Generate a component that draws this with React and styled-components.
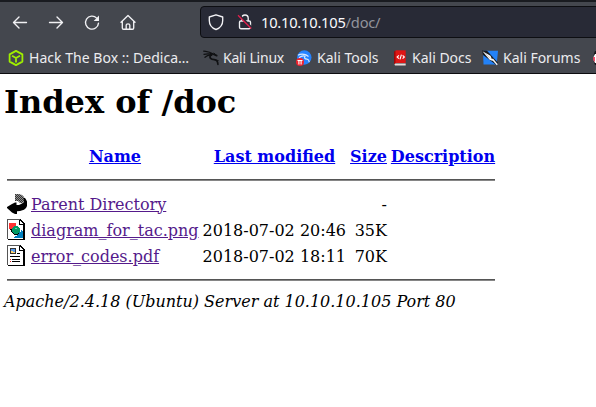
import React from 'react';
import styled, { createGlobalStyle } from 'styled-components';

const GlobalStyle = createGlobalStyle`
  body { margin: 0; background: #fff; overflow: hidden; }
  * { box-sizing: border-box; }
`;

const Window = styled.div`
  height: 407px;
  overflow: hidden;
  color: #000;
  font: 16px/19px 'DejaVu Serif', serif;
`;
const Chrome = styled.header`
  height: 74px;
  overflow: hidden;
  border-top: 2px solid #191b20;
  border-bottom: 1px solid #0c0c0f;
  background: #44474e;
  color: #ececef;
  font-family: 'Noto Sans', sans-serif;
`;
const NavBar = styled.nav`
  display: flex;
  height: 40px;
  padding: 4px 0 4px 12px;
`;
const NavButtons = styled.div`
  display: flex;
  flex: none;
  align-items: center;
  gap: 20px;
  width: 188px;
`;
const Icon = styled.svg`
  display: block;
  flex: none;
  width: ${(p) => p.$w || 16}px;
  height: ${(p) => p.$h || 16}px;
  overflow: visible;
`;
const AddressBar = styled.div`
  display: flex;
  flex: none;
  align-items: center;
  width: 420px;
  height: 32px;
  padding-left: 7px;
  border: 1px solid #0d0e12;
  border-radius: 4px;
  background: #282a36;
`;
const Url = styled.span`
  margin-left: 8px;
  color: #fbfbfe;
  font-size: 14.67px;
  letter-spacing: -0.22px;
  line-height: 20px;
  white-space: pre;
`;
const UrlPath = styled.span`
  color: #93949c;
`;
const Bookmarks = styled.nav`
  display: flex;
  height: 31px;
  padding-left: 8px;
`;
const Bookmark = styled.div`
  display: flex;
  flex: none;
  align-items: center;
  gap: ${(p) => p.$gap || 5}px;
  width: ${(p) => p.$w}px;
  font-size: 14px;
  line-height: 20px;
  white-space: nowrap;
`;
const Label = styled.span`
  letter-spacing: ${(p) => p.$ls || 0}px;
`;
const Page = styled.main`
  padding: 9px 3px 0;
`;
const Title = styled.h1`
  margin: 0 0 26px 1px;
  font-size: 32px;
  line-height: 38px;
`;
const Listing = styled.div`
  display: grid;
  width: 488px;
  margin-left: 4px;
  grid-template-columns: 20px 168px 143px 37px 104px;
  grid-template-rows: 19px 25px 26px 26px 26px 12px;
  column-gap: 4px;
  align-items: center;
`;
const Heading = styled.a`
  grid-column: ${(p) => p.$col};
  justify-self: center;
  color: #0000ee;
  font-weight: bold;
  text-decoration: underline;
  white-space: nowrap;
`;
const Rule = styled.hr`
  grid-column: 1 / -1;
  align-self: start;
  width: 100%;
  height: 2px;
  margin: ${(p) => p.$top}px 0 0;
  border: 0;
  border-top: 1px solid #555;
  background: #868686;
`;
const FileIcon = styled(Icon)`
  grid-column: 1;
`;
const FileLink = styled.a`
  grid-column: 2;
  color: #551a8b;
  text-decoration: underline;
  white-space: nowrap;
`;
const Cell = styled.span`
  grid-column: ${(p) => p.$col};
  justify-self: end;
  white-space: nowrap;
`;
const Footer = styled.address`
  margin: 11px 0 0 1px;
  font-style: italic;
`;

const stroke = { fill: 'none', stroke: '#f1f1f4', strokeWidth: 1.35, strokeLinecap: 'round', strokeLinejoin: 'round' };

const Back = () => <Icon viewBox="0 0 16 16"><path {...stroke} d="M14.5 8.5h-13M7 3 1.5 8.5 7 14" /></Icon>;
const Forward = () => <Icon viewBox="0 0 16 16"><path {...stroke} d="M1.5 8.5h13M9 3l5.5 5.5L9 14" /></Icon>;
const Reload = () => (
  <Icon viewBox="0 0 16 16">
    <path {...stroke} d="M12.7 4.1A6.5 6.5 0 1 0 14.5 9.1" />
    <path fill="#f1f1f4" d="M15 1.5v5.4H9.7z" />
  </Icon>
);
const Home = () => (
  <Icon viewBox="0 0 16 16">
    <path {...stroke} d="M1 8.2 8 1.5l7 6.7M2.3 7.3v6.6q0 1.3 1.3 1.3h8.8q1.3 0 1.3-1.3V7.3M6.2 15v-4q0-1.2 1.8-1.2t1.8 1.2v4" />
  </Icon>
);
const Shield = () => (
  <Icon viewBox="0 0 16 16">
    <path {...stroke} d="M8 .8 14.7 3v3.4C14.7 10.8 12 14 8 15.5 4 14 1.3 10.8 1.3 6.4V3z" />
  </Icon>
);
const InsecureLock = styled(Icon)`
  margin-left: 13px;
`;
const Lock = () => (
  <InsecureLock viewBox="0 0 16 16">
    <path {...stroke} d="M4.8 7V4.2a3.2 3.2 0 0 1 6.4 0V7M3.8 7h8.4q1.3 0 1.3 1.3v5q0 1.4-1.3 1.4H3.8q-1.3 0-1.3-1.4v-5Q2.5 7 3.8 7z" />
    <path stroke="#282a36" strokeWidth="2.4" d="m2.5 1.5 12 12" />
    <path stroke="#e3204d" strokeWidth="1.3" d="m1 1.3 13.2 13.2" />
  </InsecureLock>
);

const Cube = () => (
  <Icon viewBox="0 0 16 16">
    <path fill="none" stroke="#9fef00" strokeWidth="1.8" strokeLinejoin="round" d="m8 .9 6.4 3.5v7.2L8 15.1l-6.4-3.5V4.4zM4 5.8 8 8l4-2.2M8 8v4.6" />
  </Icon>
);
const Dragon = () => (
  <Icon viewBox="0 0 16 16">
    <g fill="none" stroke="#101113" strokeLinecap="round" strokeLinejoin="round">
      <path strokeWidth="1.3" d="M.7 1.2c3.1.5 6.1.3 8.3 2.6M1 4.4c2.9-1 5-.8 8-.2M2 7.3c2-1.7 4.3-2.5 6.7-1.9" />
      <path strokeWidth="1.7" d="M8.4 3.5 11 4.4l2.7 1.2M8 4.4C5.4 8 8.4 9.5 11.3 9.6c2.6.1 3.5 2 3.6 4.7" />
      <path strokeWidth=".9" d="m11 3 1.5 1.5M12 10l3.2.5" />
    </g>
  </Icon>
);
const Tools = () => (
  <Icon viewBox="0 0 16 16">
    <circle cx="8.3" cy="7.5" r="7.2" fill="#2583ff" />
    <path fill="none" stroke="#d9e9ff" strokeWidth="1.2" d="M2 5.3c3-2 5.3-1.5 8-.4l2.5 1.5M3 7.7c2.2-1.7 4.4-2 6-1.5-1 2.2-.2 2.8 2 3 2 .2 2 1.3 2.3 3" />
    <circle cx="4" cy="12" r="4" fill="#ee222e" />
    <path fill="none" stroke="#fff" strokeWidth="1.1" d="M1.5 10.5h5M2.9 10.5v4M5.1 10.5v4" />
  </Icon>
);
const Docs = () => (
  <Icon viewBox="0 0 16 16">
    <path fill="#9e0909" d="M2 1.2h2V14H2z" />
    <path fill="#e01515" d="M3.5.3h10.2V13H3.5z" />
    <path fill="#e7dcd9" d="M3 13.5h10.7v2.1H3q-1-1 0-2.1z" />
    <path fill="none" stroke="#fff" strokeWidth="1.1" d="M6.9 5.3 5.1 7l1.8 1.7m3.7-3.4L12.4 7l-1.8 1.7M9.4 4.7 8 9.3" />
  </Icon>
);
const Forums = () => (
  <Icon viewBox="0 0 16 16">
    <path fill="#2382f7" d="M1 .8h15L14.7 14.5H1.5z" />
    <path fill="#17191d" d="m0 .5 5 .3 11 12-2 2L1 5z" />
    <path fill="#f8f8f8" d="m.5 1.3 8 4.4 2.2 5.2-3.1-1.2-3.4-4zM9.5 9.2l1.5-.7 4.7 5.8-.9.9z" />
    <path fill="none" stroke="#bac0c8" strokeWidth=".8" d="m3 3.2 5 5" />
  </Icon>
);
const NextBookmark = () => (
  <Icon viewBox="0 0 16 16">
    <path fill="#16171b" d="M2 1h14v14H2L.8 12V4z" />
    <path fill="#fff" d="M2 4h2v9H2L.5 10V7z" />
    <path fill="#ed2448" d="M.3 7h1.5v5L.3 10z" />
  </Icon>
);

const ParentIcon = () => (
  <FileIcon viewBox="0 0 20 22" $w={20} $h={22}>
    <defs>
      <pattern id="speckle" width="2" height="2" patternUnits="userSpaceOnUse">
        <path fill="#333" d="M0 0h2v2H0z" />
        <path fill="#909090" d="M0 0h1v1H0zm1 1h1v1H1z" shapeRendering="crispEdges" />
      </pattern>
    </defs>
    <path fill="url(#speckle)" d="M8 1h4l3 1 2 2 1 4-3 2h-2l-2-2H8z" />
    <path fill="#000" d="M16.5 5H18l1 1.5 1 2V13l-1 2-2 1.7-4 1.3-3 .3V21H8l-3-1.5-5-4.5V14l5-3 3-1.5h1.5V12H12l3-1.5 2-1.5z" />
  </FileIcon>
);
const SheetFrame = () => (
  <>
    <path fill="#fff" d="M0 0h13l4 4v16H0z" />
    <path fill="#555" d="M0 0h13v1H1v19H0z" />
    <path fill="#000" d="M13 0h1v1h1v1h1v1h1v1h1v17H1v-1h15V6h-4V1h1v4h3V4h-1V3h-1V2h-1z" />
  </>
);
const ImageIcon = () => (
  <FileIcon viewBox="0 0 20 22" $w={20} $h={22} shapeRendering="crispEdges">
    <SheetFrame />
    <path fill="#ff3333" d="M2 4h7v6H2z" />
    <path fill="#0080c0" d="M14 11h1v1h1v7H7v-1h1v-1h2v-2h2v-2h2z" />
    <path fill="#009966" d="M7 7h4v1h1v1h1v4h-1v1h-1v1H7v-1H6v-1H5V9h1V8h1z" />
    <path fill="#6ed7a2" d="M8 9h2v1H8z" />
    <path fill="#000" d="M3 10h2v3h1v1h1v1h4v-1h1v1h-1v1H7v-1H6v-1H5v-1H4v-2H3z" />
  </FileIcon>
);
const PdfIcon = () => (
  <FileIcon viewBox="0 0 20 22" $w={20} $h={22} shapeRendering="crispEdges">
    <SheetFrame />
    <path fill="#333" d="M3 3h6v6H3z" />
    <path fill="#579bed" d="M4 4h4v4H4z" />
    <path fill="#ffd270" d="M4 6h2v1h2v1H4z" />
    <path fill="#000" d="M10 8h3v1h-3zM3 11h10v1H3zm2 3h8v1H5zm0 2h8v1H5z" />
    <path fill="#e12626" d="M3 14h1v1H3zm0 2h1v1H3z" />
  </FileIcon>
);

const bookmarks = [
  { label: 'Hack The Box :: Dedica…', width: 195, icon: <Cube />, spacing: 0.03 },
  { label: 'Kali Linux', width: 93, icon: <Dragon />, gap: 4, spacing: -0.2 },
  { label: 'Kali Tools', width: 96, icon: <Tools /> },
  { label: 'Kali Docs', width: 90, icon: <Docs />, gap: 4 },
  { label: 'Kali Forums', width: 111, icon: <Forums /> },
  { label: '', width: 16, icon: <NextBookmark /> },
];

const files = [
  { name: 'Parent Directory', icon: <ParentIcon />, date: '', size: '-' },
  { name: 'diagram_for_tac.png', icon: <ImageIcon />, date: '2018-07-02 20:46', size: '35K' },
  { name: 'error_codes.pdf', icon: <PdfIcon />, date: '2018-07-02 18:11', size: '70K' },
];

export default function App() {
  return (
    <Window>
      <GlobalStyle />
      <Chrome>
        <NavBar>
          <NavButtons><Back /><Forward /><Reload /><Home /></NavButtons>
          <AddressBar><Shield /><Lock /><Url>10.10.10.105<UrlPath>/doc/</UrlPath></Url></AddressBar>
        </NavBar>
        <Bookmarks>
          {bookmarks.map((item) => (
            <Bookmark key={item.label} $w={item.width} $gap={item.gap}>
              {item.icon}
              <Label $ls={item.spacing}>{item.label}</Label>
            </Bookmark>
          ))}
        </Bookmarks>
      </Chrome>
      <Page>
        <Title>Index of /doc</Title>
        <Listing>
          <Heading $col={2}>Name</Heading>
          <Heading $col={3}>Last modified</Heading>
          <Heading $col={4}>Size</Heading>
          <Heading $col={5}>Description</Heading>
          <Rule $top={13} />
          {files.map((file) => (
            <React.Fragment key={file.name}>
              {file.icon}
              <FileLink>{file.name}</FileLink>
              <Cell $col={3}>{file.date}</Cell>
              <Cell $col={4}>{file.size}</Cell>
            </React.Fragment>
          ))}
          <Rule $top={10} />
        </Listing>
        <Footer>Apache/2.4.18 (Ubuntu) Server at 10.10.10.105 Port 80</Footer>
      </Page>
    </Window>
  );
}
